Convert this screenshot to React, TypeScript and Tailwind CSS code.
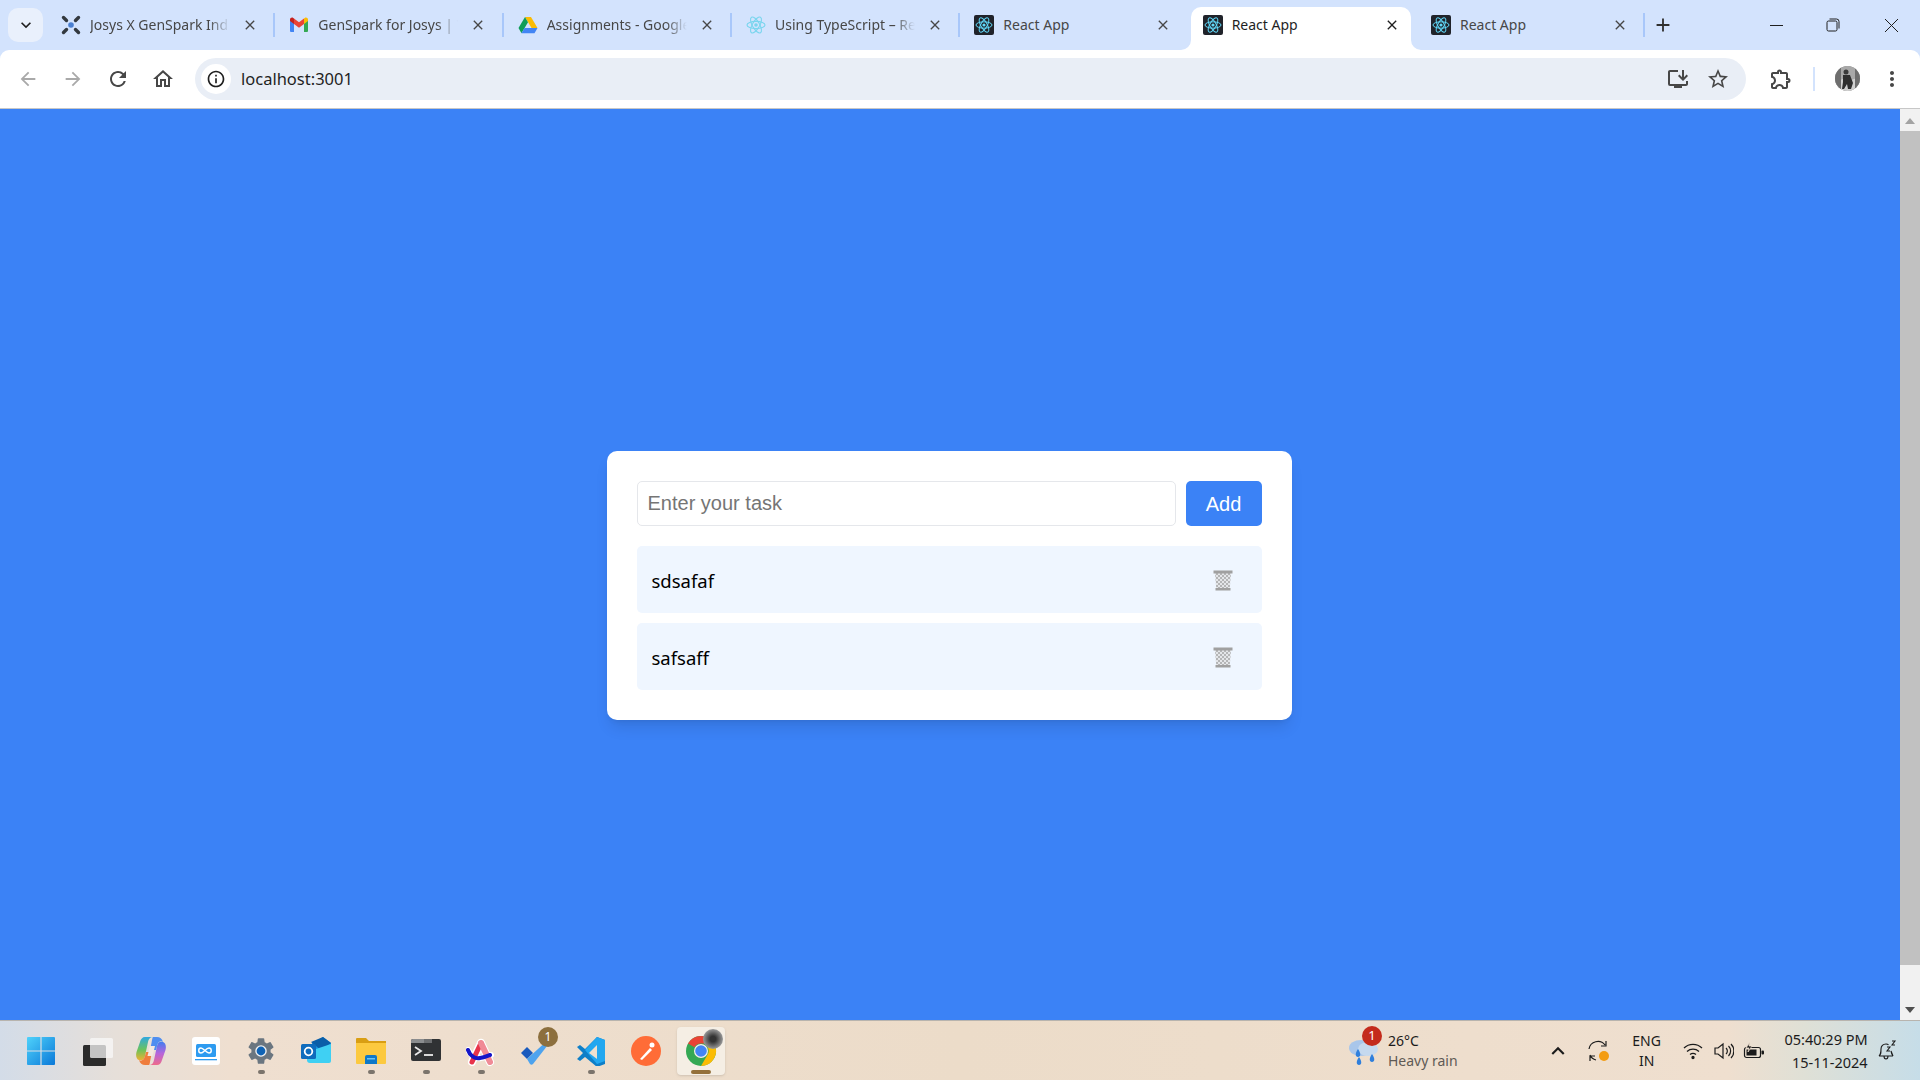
import type { ReactNode } from "react";
import {
  MdAdd,
  MdArrowBack,
  MdArrowForward,
  MdClose,
  MdExpandMore,
  MdInfoOutline,
  MdKeyboardArrowUp,
  MdMoreVert,
  MdOutlineExtension,
  MdOutlineHome,
  MdOutlineInstallDesktop,
  MdRefresh,
  MdStarBorder,
} from "react-icons/md";

const uiFont = "font-['Noto_Sans','Open_Sans',sans-serif]";

function ReactFavicon() {
  return (
    <svg width="20" height="20" viewBox="0 0 20 20">
      <rect width="20" height="20" rx="2" fill="#20232a" />
      <g fill="none" stroke="#61dafb" strokeWidth="1">
        <ellipse cx="10" cy="10" rx="8" ry="3.2" />
        <ellipse cx="10" cy="10" rx="8" ry="3.2" transform="rotate(60 10 10)" />
        <ellipse cx="10" cy="10" rx="8" ry="3.2" transform="rotate(120 10 10)" />
      </g>
      <circle cx="10" cy="10" r="1.6" fill="#61dafb" />
    </svg>
  );
}

function TsFavicon() {
  return (
    <svg width="20" height="20" viewBox="0 0 20 20">
      <g fill="none" stroke="#79d5ee" strokeWidth="1.1">
        <ellipse cx="10" cy="10" rx="9" ry="3.6" />
        <ellipse cx="10" cy="10" rx="9" ry="3.6" transform="rotate(60 10 10)" />
        <ellipse cx="10" cy="10" rx="9" ry="3.6" transform="rotate(120 10 10)" />
      </g>
      <circle cx="10" cy="10" r="1.8" fill="#79d5ee" />
    </svg>
  );
}

function JosysFavicon() {
  return (
    <svg width="20" height="20" viewBox="0 0 20 20">
      <g stroke="#33393f" strokeWidth="3.4" strokeLinecap="round">
        <path d="M2.5 2.5 5.500 5.500" />
        <path d="M17.5 2.5 14.500 5.500" />
        <path d="M2.5 17.5 5.500 14.500" />
        <path d="M17.5 17.5 14.500 14.500" />
      </g>
      <circle cx="10" cy="10" r="2.8" fill="#4a7fd0" />
    </svg>
  );
}

function GmailFavicon() {
  return (
    <svg width="20" height="20" viewBox="0 0 20 20">
      <path d="M1 5v11a1 1 0 0 0 1 1h3V8z" fill="#4285f4" />
      <path d="M19 5v11a1 1 0 0 1-1 1h-3V8z" fill="#34a853" />
      <path d="M15 3.5V9l4-3V4.5c0-1.6-1.9-2.6-3.2-1.6z" fill="#fbbc04" />
      <path d="M5 9V3.5L10 7.3 15 3.5V9l-5 3.8z" fill="#ea4335" />
      <path d="M1 4.500V6l4 3V3.500l-.8-.6C2.900 1.900 1 2.900 1 4.500z" fill="#c5221f" />
    </svg>
  );
}

function DriveFavicon() {
  return (
    <svg width="20" height="20" viewBox="0 0 20 20">
      <path d="M7 2h6l6.500 11h-6z" fill="#fbbc04" />
      <path d="M7 2 .5 13l3 5.200L10 7.300z" fill="#0f9d58" />
      <path d="M6.500 13h13l-3 5.200h-13z" fill="#4285f4" />
    </svg>
  );
}

type TabProps = {
  title: string;
  icon: ReactNode;
  active?: boolean;
  separator?: boolean;
  fade?: boolean;
};

function Tab({ title, icon, active = false, separator = false, fade = false }: TabProps) {
  return (
    <div className="relative flex h-[43px] w-[228.33px] shrink-0 items-center pb-[7px] pl-[15px]">
      {active && (
        <div className="absolute inset-y-0 left-[3px] right-[5px] rounded-t-[10px] bg-white">
          <svg className="absolute bottom-0 left-[-10px]" width="10" height="10" viewBox="0 0 10 10">
            <path d="M10 0v10H0a10 10 0 0 0 10-10z" fill="#fff" />
          </svg>
          <svg className="absolute bottom-0 right-[-10px]" width="10" height="10" viewBox="0 0 10 10">
            <path d="M0 0v10h10A10 10 0 0 1 0 0z" fill="#fff" />
          </svg>
        </div>
      )}
      <div className="relative flex w-[20px] shrink-0 items-center justify-center">{icon}</div>
      <div
        className={`relative ml-[9px] w-[140px] overflow-hidden whitespace-nowrap text-[14px] leading-[20px] ${
          active ? "text-[#1f1f1f]" : "text-[#474747]"
        } ${fade ? "[mask-image:linear-gradient(to_right,black_85%,transparent)]" : ""}`}
      >
        {title}
      </div>
      <MdClose className={`relative ml-[12px] text-[16px] ${active ? "text-[#1f1f1f]" : "text-[#474747]"}`} />
      {separator && <div className="absolute right-[-1px] top-[6px] h-[24px] w-[2px] bg-[#a8c7fa]" />}
    </div>
  );
}

function TabStrip() {
  return (
    <div className={`flex h-[50px] shrink-0 items-end bg-[#d3e3fd] ${uiFont}`}>
      <div className="mb-[8px] ml-[8px] mr-[3px] flex h-[34px] w-[35px] items-center justify-center rounded-[10px] bg-[#e9f0fc]">
        <MdExpandMore className="text-[20px] text-[#1f1f1f]" />
      </div>
      <Tab title="Josys X GenSpark Ind" icon={<JosysFavicon />} separator fade />
      <Tab title="GenSpark for Josys | T" icon={<GmailFavicon />} separator fade />
      <Tab title="Assignments - Google" icon={<DriveFavicon />} separator fade />
      <Tab title="Using TypeScript – Re" icon={<TsFavicon />} separator fade />
      <Tab title="React App" icon={<ReactFavicon />} />
      <Tab title="React App" icon={<ReactFavicon />} active />
      <Tab title="React App" icon={<ReactFavicon />} separator />
      <div className="mb-[7px] ml-[1px] flex h-[36px] w-[36px] items-center justify-center">
        <MdAdd className="text-[22px] text-[#303030]" />
      </div>
      <div className="mb-[7px] ml-auto flex h-[36px] items-center text-[#1f1f1f]">
        <div className="flex w-[56px] justify-center">
          <div className="h-[1px] w-[13px] bg-[#1f1f1f]" />
        </div>
        <div className="flex w-[58px] justify-center">
          <svg width="14" height="14" viewBox="0 0 14 14" fill="none" stroke="#1f1f1f" strokeWidth="1">
            <rect x="1" y="3" width="10" height="10" rx="1.500" />
            <path d="M3.500 1h7a2.500 2.500 0 0 1 2.500 2.500v7" />
          </svg>
        </div>
        <div className="flex w-[58px] justify-center">
          <svg width="15" height="15" viewBox="0 0 15 15" stroke="#1f1f1f" strokeWidth="1">
            <path d="M1 1l13 13M14 1 1 14" />
          </svg>
        </div>
      </div>
    </div>
  );
}

function NavSlot({ children }: { children: ReactNode }) {
  return <div className="flex w-[45px] shrink-0 justify-center">{children}</div>;
}

function Toolbar() {
  return (
    <div className="bg-[#d3e3fd]">
      <div
        className={`flex h-[59px] items-center rounded-t-[9px] border-b border-[#c7c7c7] bg-white pb-[1px] pl-[5px] ${uiFont}`}
      >
        <NavSlot>
          <MdArrowBack className="text-[22px] text-[#a9a9a9]" />
        </NavSlot>
        <NavSlot>
          <MdArrowForward className="text-[22px] text-[#a9a9a9]" />
        </NavSlot>
        <NavSlot>
          <MdRefresh className="text-[24px] text-[#474747]" />
        </NavSlot>
        <NavSlot>
          <MdOutlineHome className="text-[24px] text-[#474747]" />
        </NavSlot>
        <div className="ml-[10px] flex h-[42px] w-[1551px] shrink-0 items-center rounded-full bg-[#e9eef6] pl-[6px] pr-[8px]">
          <div className="flex h-[30px] w-[30px] items-center justify-center rounded-full bg-white">
            <MdInfoOutline className="text-[20px] text-[#1f1f1f]" />
          </div>
          <span className="ml-[10px] pt-[2px] text-[16.500px] text-[#1f1f1f]">localhost:3001</span>
          <div className="ml-auto flex w-[40px] justify-center">
            <MdOutlineInstallDesktop className="text-[24px] text-[#474747]" />
          </div>
          <div className="flex w-[40px] justify-center">
            <MdStarBorder className="text-[24px] text-[#474747]" />
          </div>
        </div>
        <MdOutlineExtension className="ml-[23px] text-[24px] text-[#474747]" />
        <div className="ml-[20px] h-[24px] w-[2px] bg-[#d3e3fd]" />
        <div className="ml-[20px] h-[25px] w-[25px] overflow-hidden rounded-full bg-[#8a8a8a]">
          <svg width="25" height="25" viewBox="0 0 25 25">
            <rect width="25" height="25" fill="#a8a8a8" />
            <path d="M0 16l8-3 5 2 12-4v14H0z" fill="#d0d0d0" />
            <path d="M0 0h6v25H0zM20 0h5v25h-5z" fill="#6e6e6e" />
            <circle cx="11" cy="6" r="2.500" fill="#3a3a3a" />
            <path d="M8 9h7l3 8-2 6h-3l-1-5-3 5H7l1-7z" fill="#2f2f2f" />
          </svg>
        </div>
        <MdMoreVert className="ml-[20px] text-[24px] text-[#474747]" />
      </div>
    </div>
  );
}

function TrashIcon() {
  return (
    <svg className="mt-[2px]" width="20" height="21" viewBox="0 0 20 21">
      <defs>
        <pattern id="mesh" width="4" height="4" patternUnits="userSpaceOnUse">
          <rect width="4" height="4" fill="#e4e6e9" />
          <path d="M0 0l4 4M4 0 0 4" stroke="#a8a8a8" strokeWidth="0.800" />
        </pattern>
      </defs>
      <path d="M2 3h16l-1.300 16H3.300z" fill="url(#mesh)" />
      <rect x="0.500" y="0.500" width="19" height="3" fill="#a0a0a0" />
      <rect x="2.500" y="18" width="15" height="2.500" fill="#a0a0a0" />
    </svg>
  );
}

function TaskItem({ label }: { label: string }) {
  return (
    <li className="flex h-[67px] items-center justify-between rounded-[5px] bg-[#eff6ff] pl-[15px] pr-[29px]">
      <span className={`pt-[2px] text-[18.500px] text-black ${uiFont}`}>{label}</span>
      <TrashIcon />
    </li>
  );
}

function TodoCard() {
  return (
    <div className="h-fit w-[685px] rounded-[10px] bg-white p-[30px] shadow-lg">
      <div className="flex gap-[10px]">
        <input
          readOnly
          placeholder="Enter your task"
          className="h-[45px] min-w-0 flex-1 rounded-[5px] border border-[#e5e7eb] px-[10px] font-['Liberation_Sans',sans-serif] text-[20px] outline-none placeholder:text-[#757575]"
        />
        <button className="h-[45px] w-[76px] rounded-[5px] bg-[#3b82f6] font-['Liberation_Sans',sans-serif] text-[20px] text-white">
          Add
        </button>
      </div>
      <ul className="mt-[20px] flex flex-col gap-[10px]">
        <TaskItem label="sdsafaf" />
        <TaskItem label="safsaff" />
      </ul>
    </div>
  );
}

function Scrollbar() {
  return (
    <div className="flex w-[20px] shrink-0 flex-col items-center bg-[#f1f1f1]">
      <svg className="mt-[9px]" width="10" height="6" viewBox="0 0 10 6">
        <path d="M5 0l5 6H0z" fill="#a3a3a3" />
      </svg>
      <div className="mt-[7px] h-[834px] w-full bg-[#c1c1c1]" />
      <svg className="mt-[42px]" width="10" height="6" viewBox="0 0 10 6">
        <path d="M5 6 0 0h10z" fill="#505050" />
      </svg>
    </div>
  );
}

/* ---- taskbar logos ---- */

function WindowsLogo() {
  return (
    <svg width="30" height="30" viewBox="0 0 30 30">
      <defs>
        <linearGradient id="win" x1="0" y1="0" x2="1" y2="1">
          <stop offset="0" stopColor="#4fd2fb" />
          <stop offset="1" stopColor="#0a78d8" />
        </linearGradient>
      </defs>
      <path d="M1 2a1 1 0 0 1 1-1h12.400v13.400H1zM15.600 1H28a1 1 0 0 1 1 1v12.400H15.600zM1 15.600h13.400V29H2a1 1 0 0 1-1-1zM15.600 15.600H29V28a1 1 0 0 1-1 1H15.600z" fill="url(#win)" />
    </svg>
  );
}

function TaskViewLogo() {
  return (
    <svg className="overflow-visible" width="30" height="30" viewBox="0 0 30 30">
      <rect x="2" y="9" width="23" height="21" rx="1.500" fill="#2b2b2b" />
      <rect x="9" y="2" width="23" height="20" rx="1.500" fill="#f8f8f8" fillOpacity="0.75" />
    </svg>
  );
}

function CopilotLogo() {
  return (
    <svg width="30" height="30" viewBox="0 0 30 30">
      <defs>
        <linearGradient id="cp1" x1="0" y1="0" x2="0" y2="1">
          <stop offset="0" stopColor="#2fa8e0" />
          <stop offset="0.55" stopColor="#6cc35a" />
          <stop offset="1" stopColor="#f0b030" />
        </linearGradient>
        <linearGradient id="cp2" x1="0" y1="0" x2="0" y2="1">
          <stop offset="0" stopColor="#3f7df0" />
          <stop offset="0.5" stopColor="#b565dc" />
          <stop offset="1" stopColor="#ee6a8a" />
        </linearGradient>
      </defs>
      <path d="M9 1h8c-3 0-4.500 2-5 5l-3 14c-.8 4-3 5-6 4-2.500-.8-3.500-4-2.500-8L4 6c.7-3 2.500-5 5-5z" fill="url(#cp1)" />
      <path d="M21 29h-8c3 0 4.500-2 5-5l3-14c.8-4 3-5 6-4 2.500.8 3.500 4 2.500 8L26 24c-.7 3-2.500 5-5 5z" fill="url(#cp2)" />
      <path d="M17 1h4c3 0 5 1.500 6 5-2-1.500-5-.5-6 4l-1 4h-6l1.500-7c.5-3 1-6 1.500-6z" fill="#4e8ef0" />
      <path d="M13 29H9c-3 0-5-1.500-6-5 2 1.500 5 .5 6-4l1-4h6l-1.500 7c-.5 3-1 6-1.500 6z" fill="#ef7d3c" />
      <path d="M14 10h5l-2.500 10h-5z" fill="#f4eadf" />
    </svg>
  );
}

function ScreenAppLogo() {
  return (
    <svg width="30" height="30" viewBox="0 0 30 30">
      <rect x="1" y="1" width="28" height="28" rx="3" fill="#fff" />
      <rect x="5" y="8" width="20" height="13" rx="1.500" fill="#2e9bf0" />
      <path d="M10 12c-3 0-3 5 0 5 2.500 0 5-5 8-5 3 0 3 5 0 5-3 0-5.500-5-8-5z" fill="none" stroke="#fff" strokeWidth="1.400" />
      <rect x="4" y="23" width="22" height="1.300" fill="#2e9bf0" />
    </svg>
  );
}

function SettingsLogo() {
  return (
    <svg width="32" height="32" viewBox="0 0 24 24">
      <path
        d="M19.140 12.940c.040-.3.060-.61.060-.94 0-.32-.020-.64-.070-.94l2.030-1.580a.49.49 0 0 0 .12-.61l-1.920-3.320a.488.488 0 0 0-.59-.22l-2.390.96c-.5-.38-1.030-.7-1.620-.94l-.36-2.540a.484.484 0 0 0-.48-.41h-3.840c-.24 0-.43.170-.47.410l-.36 2.540c-.59.240-1.130.57-1.620.94l-2.390-.96c-.22-.080-.47 0-.59.220L2.740 8.870c-.12.210-.08.470.12.610l2.030 1.580c-.05.3-.09.630-.09.940s.02.640.07.940l-2.030 1.580a.49.49 0 0 0-.12.610l1.920 3.320c.12.220.37.290.59.220l2.390-.96c.5.380 1.030.7 1.620.94l.36 2.540c.05.240.24.410.48.410h3.840c.24 0 .44-.170.47-.41l.36-2.540c.59-.240 1.130-.56 1.620-.94l2.390.96c.22.080.47 0 .59-.220l1.920-3.320c.12-.22.070-.47-.12-.61l-2.010-1.580z"
        fill="#6b7680"
      />
      <circle cx="12" cy="12" r="4.300" fill="#f2f2f2" />
      <circle cx="12" cy="12" r="3.300" fill="#0f63b5" />
    </svg>
  );
}

function OutlookLogo() {
  return (
    <svg width="30" height="30" viewBox="0 0 30 30">
      <path d="M11 7 22 1l8 6v14a2 2 0 0 1-2 2H11z" fill="#1490df" />
      <path d="M10 6l12-5 8 6-10 7z" fill="#0a5ea8" />
      <path d="M6 16l24-8v17a2 2 0 0 1-2 2H9a3 3 0 0 1-3-3z" fill="#3fd0f3" />
      <rect x="0" y="8" width="15" height="15" rx="1.500" fill="#0f6cbd" />
      <circle cx="7.500" cy="15.500" r="3.800" fill="none" stroke="#fff" strokeWidth="1.800" />
    </svg>
  );
}

function ExplorerLogo() {
  return (
    <svg width="30" height="30" viewBox="0 0 30 30">
      <path d="M0 3a1 1 0 0 1 1-1h9l3 3h17v5H0z" fill="#d99e13" />
      <path d="M0 7h30v20a1 1 0 0 1-1 1H1a1 1 0 0 1-1-1z" fill="#fcc93f" />
      <path d="M9 21a2 2 0 0 1 2-2h8a2 2 0 0 1 2 2v7H9z" fill="#0f78c8" />
      <rect x="11" y="22" width="8" height="1.500" fill="#6cc4f2" />
    </svg>
  );
}

function TerminalLogo() {
  return (
    <svg width="30" height="30" viewBox="0 0 30 30">
      <rect y="3" width="30" height="22" rx="2" fill="#303234" />
      <path d="M2 3h11v4H0V5a2 2 0 0 1 2-2z" fill="#8b8d8f" />
      <rect x="13" y="3" width="8" height="4" fill="#6c6e70" />
      <path d="M4 11l6 4-6 4" fill="none" stroke="#e8e8e8" strokeWidth="1.800" />
      <rect x="13" y="18" width="9" height="2" fill="#d8d8d8" />
    </svg>
  );
}

function ArcLogo() {
  return (
    <svg width="30" height="30" viewBox="0 0 30 30">
      <path d="M6 26 15 7" stroke="#fff" strokeWidth="8" strokeLinecap="round" />
      <path d="M15 7l9 19" stroke="#fff" strokeWidth="8" strokeLinecap="round" />
      <path d="M2 14c4 7 9 9 13 8 4-.5 7-2 10-3" fill="none" stroke="#fff" strokeWidth="6" strokeLinecap="round" />
      <path d="M6 26 15 7" stroke="#e8334a" strokeWidth="5" strokeLinecap="round" />
      <path d="M15 7l9 19" stroke="#f08a96" strokeWidth="6" strokeLinecap="round" />
      <path d="M2 14c2 6 7 9 12 8 5-.5 7-2 10-3" fill="none" stroke="#1414c8" strokeWidth="4" strokeLinecap="round" />
    </svg>
  );
}

function TodoLogo() {
  return (
    <svg width="30" height="30" viewBox="0 0 30 30">
      <path d="M0 17 6 11l6 6-6 6z" fill="#195abd" />
      <path d="M6 23 28 3l2 2-18 23c-1 1-2 1-3 0z" fill="#4da3ee" />
    </svg>
  );
}

function VsCodeLogo() {
  return (
    <svg width="30" height="30" viewBox="0 0 30 30">
      <path d="M21 1 9 13l-5-4-3 2 6 6-6 6 3 2 5-4 12 10 8-3V4z" fill="#0f7fc8" />
      <path d="M21 1 9 14l12 14 8-3V4z" fill="#22a7f0" />
      <path d="M21 9l-8 8 8 6z" fill="#efe0cf" />
    </svg>
  );
}

function PostmanLogo() {
  return (
    <svg width="30" height="30" viewBox="0 0 30 30">
      <circle cx="15" cy="15" r="15" fill="#ff6c37" />
      <path d="M9 23 19 12l2 2L11 24z" fill="#fff" />
      <circle cx="21" cy="9" r="2.500" fill="#fff" />
    </svg>
  );
}

function ChromeLogo() {
  return (
    <svg width="32" height="32" viewBox="0 0 32 32">
      <circle cx="16" cy="16" r="15" fill="#34a853" />
      <path d="M16 1a15 15 0 0 1 13 7.500H16a7.500 7.500 0 0 0-6.500 3.750L3 8.500A15 15 0 0 1 16 1z" fill="#ea4335" />
      <path d="M29 8.500A15 15 0 0 1 16 31l6.500-11.250A7.500 7.500 0 0 0 22.500 12z" fill="#fbbc04" />
      <circle cx="16" cy="16" r="7" fill="#f6f0e8" />
      <circle cx="16" cy="16" r="5.800" fill="#4285f4" />
    </svg>
  );
}

function TaskIcon({
  children,
  running = false,
  active = false,
  badge,
}: {
  children: ReactNode;
  running?: boolean;
  active?: boolean;
  badge?: ReactNode;
}) {
  return (
    <div
      className={`relative flex h-[48px] w-[48px] shrink-0 items-center justify-center rounded-[4px] ${
        active ? "bg-[#f5eee4] shadow-sm" : ""
      }`}
    >
      {children}
      {badge}
      {running && (
        <div
          className={`absolute bottom-[1px] h-[4px] rounded-full ${
            active ? "w-[20px] bg-[#94703a]" : "w-[7px] bg-[#7b746c]"
          }`}
        />
      )}
    </div>
  );
}

function WeatherIcon() {
  return (
    <svg width="34" height="34" viewBox="0 0 34 34">
      <ellipse cx="15" cy="14" rx="12" ry="8" fill="#a9c6ea" />
      <ellipse cx="22" cy="15" rx="10" ry="7" fill="#c5d9ef" />
      <path d="M12 15c-3 4-3 8 0 8s3-4 0-8zM26 20c-3 4-3 8 0 8s3-4 0-8zM13 23c-3 4-3 8 0 8s3-4 0-8z" fill="#2f7fdc" />
    </svg>
  );
}

function Taskbar() {
  return (
    <div
      className={`flex h-[60px] shrink-0 items-center border-t border-[#b8b4ae] bg-[linear-gradient(to_right,#d3dce8_0%,#e6dfd9_6%,#efdfd0_12%,#ecdcc9_50%,#efdfcf_90%,#dfe0d6_94%,#c6dde8_100%)] pl-[17px] ${uiFont}`}
    >
      <div className="flex items-center gap-[7px]">
        <TaskIcon><WindowsLogo /></TaskIcon>
        <TaskIcon><TaskViewLogo /></TaskIcon>
        <TaskIcon><CopilotLogo /></TaskIcon>
        <TaskIcon><ScreenAppLogo /></TaskIcon>
        <TaskIcon running><SettingsLogo /></TaskIcon>
        <TaskIcon><OutlookLogo /></TaskIcon>
        <TaskIcon running><ExplorerLogo /></TaskIcon>
        <TaskIcon running><TerminalLogo /></TaskIcon>
        <TaskIcon running><ArcLogo /></TaskIcon>
        <TaskIcon
          badge={
            <div className="absolute right-[2px] top-[0px] flex h-[20px] w-[20px] items-center justify-center rounded-full bg-[#8c6f3e] text-[12px] text-white">
              1
            </div>
          }
        >
          <TodoLogo />
        </TaskIcon>
        <TaskIcon running><VsCodeLogo /></TaskIcon>
        <TaskIcon><PostmanLogo /></TaskIcon>
        <TaskIcon
          running
          active
          badge={
            <div className="absolute right-[2px] top-[2px] h-[20px] w-[20px] rounded-full bg-[radial-gradient(circle,#333_20%,#999_70%)]" />
          }
        >
          <ChromeLogo />
        </TaskIcon>
      </div>

      <div className="relative ml-[621px] flex items-center">
        <WeatherIcon />
        <div className="absolute left-[16px] top-[-5px] flex h-[20px] w-[20px] items-center justify-center rounded-full bg-[#c42b1c] text-[13px] text-white">
          1
        </div>
        <div className="ml-[8px] text-[14px] leading-[20px]">
          <div className="text-[#1b1b1b]">26°C</div>
          <div className="text-[#5f5a55]">Heavy rain</div>
        </div>
      </div>

      <MdKeyboardArrowUp className="ml-[87px] text-[26px] text-[#1b1b1b]" />
      <svg className="ml-[16px]" width="24" height="26" viewBox="0 0 24 26" fill="none" stroke="#1b1b1b" strokeWidth="1.200">
        <path d="M2 11a9 9 0 0 1 16-4M19 3v5h-5" />
        <path d="M3 17a9 9 0 0 0 6 5M3 23v-5h5" />
        <circle cx="17" cy="18" r="5" fill="#f39c12" stroke="none" />
      </svg>
      <div className="ml-[11px] w-[50px] text-center text-[14px] leading-[20px] text-[#1b1b1b]">
        <div>ENG</div>
        <div>IN</div>
      </div>
      <svg className="ml-[11px]" width="20" height="18" viewBox="0 0 20 18" fill="none" stroke="#1b1b1b" strokeWidth="1.300">
        <path d="M1 6a13 13 0 0 1 18 0M4 9.500a9 9 0 0 1 12 0M7 12.500a5 5 0 0 1 6 0" />
        <circle cx="10" cy="15.500" r="1" fill="#1b1b1b" />
      </svg>
      <svg className="ml-[11px]" width="20" height="20" viewBox="0 0 20 20" fill="none" stroke="#1b1b1b" strokeWidth="1.200">
        <path d="M1 7v6h3l5 4V3L4 7z" />
        <path d="M12 7a4 4 0 0 1 0 6M14.500 5a7 7 0 0 1 0 10M17 3a10 10 0 0 1 0 14" />
      </svg>
      <svg className="ml-[9px]" width="22" height="18" viewBox="0 0 22 18">
        <rect x="1.500" y="5.500" width="16" height="10" rx="2" fill="none" stroke="#1b1b1b" strokeWidth="1.200" />
        <rect x="3.500" y="7.500" width="10" height="6" fill="#1b1b1b" />
        <rect x="18.500" y="8.500" width="2.500" height="4" rx="1" fill="#1b1b1b" />
        <path d="M7 0 3 6h3l-1 4 4-6H6z" fill="#1b1b1b" stroke="#efdfcf" strokeWidth="0.800" />
      </svg>
      <div className="ml-[1px] w-[102px] text-right text-[14.500px] leading-[23px] text-[#1b1b1b]">
        <div>05:40:29 PM</div>
        <div>15-11-2024</div>
      </div>
      <svg className="ml-[9px]" width="20" height="22" viewBox="0 0 20 22" fill="none" stroke="#1b1b1b" strokeWidth="1.100">
        <path d="M2 16c2-2 2-3 2-7 0-3 2-5 5-5 1 0 2 .3 2.500 .8M14 11c.2 2 1 3.500 2 5zM2 16h14M7 16c0 4 4 4 4 0" />
        <path d="M10 7h3l-3 4h3M15 1h3l-3 4h3" />
      </svg>
    </div>
  );
}

export default function App() {
  return (
    <div className="flex h-screen w-full flex-col overflow-hidden">
      <TabStrip />
      <Toolbar />
      <div className="flex min-h-0 flex-1">
        <main className="flex flex-1 justify-center bg-[#3b82f6] pr-[2px] pt-[342px]">
          <TodoCard />
        </main>
        <Scrollbar />
      </div>
      <Taskbar />
    </div>
  );
}
